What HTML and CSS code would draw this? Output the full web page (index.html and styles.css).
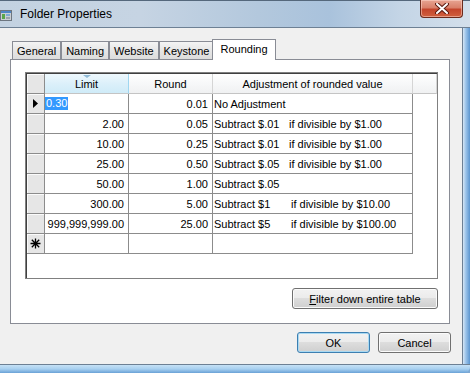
FILE: index.html
```html
<!DOCTYPE html>
<html lang="en">
<head>
  <meta charset="UTF-8">
  <title>Folder Properties</title>
  <link rel="stylesheet" href="styles.css">
</head>
<body>
  <div class="window">
    <!-- Title Bar -->
    <div class="titlebar">
      <svg class="app-icon" width="12" height="11" viewBox="0 0 12 11">
        <rect x="0.5" y="0.5" width="11" height="10" fill="#c9ced4" stroke="#6d7680"/>
        <rect x="1" y="1" width="10" height="2" fill="#4f86c6"/>
        <rect x="2" y="4" width="3" height="5" fill="#5aa54a"/>
        <rect x="6" y="4" width="4" height="2" fill="#7fa9d6"/>
        <rect x="6" y="7" width="4" height="2" fill="#9aa3ad"/>
      </svg>
      <span class="title">Folder Properties</span>
      <div class="close-btn">
        <svg width="14" height="11" viewBox="0 0 14 11">
          <path d="M2 1 L12 10 M12 1 L2 10" stroke="#5a1a10" stroke-width="4" stroke-linecap="round"/>
          <path d="M2 1 L12 10 M12 1 L2 10" stroke="#ffffff" stroke-width="2" stroke-linecap="round"/>
        </svg>
      </div>
    </div>

    <div class="frame">
      <div class="client">
        <!-- Tabs -->
        <div class="tabs">
          <div class="tab">General</div>
          <div class="tab">Naming</div>
          <div class="tab">Website</div>
          <div class="tab">Keystone</div>
          <div class="tab active">Rounding</div>
        </div>

        <div class="tab-page">
          <!-- Rounding Grid -->
          <div class="grid">
            <div class="grid-head">
              <div class="rh"></div>
              <div class="hcell col-limit sorted">Limit<span class="sort-glyph"></span></div>
              <div class="hcell col-round">Round</div>
              <div class="hcell col-adj">Adjustment of rounded value</div>
              <div class="hcell col-fill"></div>
            </div>

            <div class="grid-row">
              <div class="rh">
                <svg width="6" height="9" viewBox="0 0 6 9"><path d="M0 0 L5 4.5 L0 9 Z" fill="#000"/></svg>
              </div>
              <div class="cell col-limit edit"><span class="selected">0.30</span></div>
              <div class="cell col-round num">0.01</div>
              <div class="cell col-adj">No Adjustment</div>
            </div>
            <div class="grid-row">
              <div class="rh"></div>
              <div class="cell col-limit num">2.00</div>
              <div class="cell col-round num">0.05</div>
              <div class="cell col-adj"><span class="act">Subtract $.01</span>if divisible by $1.00</div>
            </div>
            <div class="grid-row">
              <div class="rh"></div>
              <div class="cell col-limit num">10.00</div>
              <div class="cell col-round num">0.25</div>
              <div class="cell col-adj"><span class="act">Subtract $.01</span>if divisible by $1.00</div>
            </div>
            <div class="grid-row">
              <div class="rh"></div>
              <div class="cell col-limit num">25.00</div>
              <div class="cell col-round num">0.50</div>
              <div class="cell col-adj"><span class="act">Subtract $.05</span>if divisible by $1.00</div>
            </div>
            <div class="grid-row">
              <div class="rh"></div>
              <div class="cell col-limit num">50.00</div>
              <div class="cell col-round num">1.00</div>
              <div class="cell col-adj">Subtract $.05</div>
            </div>
            <div class="grid-row">
              <div class="rh"></div>
              <div class="cell col-limit num">300.00</div>
              <div class="cell col-round num">5.00</div>
              <div class="cell col-adj"><span class="act wide">Subtract $1</span>if divisible by $10.00</div>
            </div>
            <div class="grid-row">
              <div class="rh"></div>
              <div class="cell col-limit num">999,999,999.00</div>
              <div class="cell col-round num">25.00</div>
              <div class="cell col-adj"><span class="act wide">Subtract $5</span>if divisible by $100.00</div>
            </div>
            <div class="grid-row">
              <div class="rh">
                <svg width="11" height="11" viewBox="0 0 11 11">
                  <path d="M5.5 0.5 V10.5 M0.5 5.5 H10.5 M1.8 1.8 L9.2 9.2 M9.2 1.8 L1.8 9.2" stroke="#000" stroke-width="1.3"/>
                </svg>
              </div>
              <div class="cell col-limit"></div>
              <div class="cell col-round"></div>
              <div class="cell col-adj"></div>
            </div>
          </div>

          <div class="page-actions">
            <button class="btn btn-filter"><u>F</u>ilter down entire table</button>
          </div>
        </div>

        <!-- Dialog Buttons -->
        <div class="dialog-actions">
          <button class="btn btn-default">OK</button>
          <button class="btn">Cancel</button>
        </div>
      </div>
      <div class="frame-right"></div>
    </div>
    <div class="frame-bottom"></div>
  </div>
</body>
</html>
```

FILE: styles.css
```css
/* General Styles */
* {
  box-sizing: border-box;
}

body {
  margin: 0;
  width: 470px;
  height: 373px;
  overflow: hidden;
  font-family: "Liberation Sans", Arial, sans-serif;
  font-size: 11px;
  color: #000;
  background-color: #7ea9d4;
}

.window {
  display: flex;
  flex-direction: column;
  width: 470px;
  height: 373px;
}

/* Title Bar */
.titlebar {
  height: 28px;
  display: flex;
  align-items: center;
  border-top: 1px solid #55687c;
  border-bottom: 1px solid #6d8094;
  background: linear-gradient(to right, #c3d2e1 0%, #c6d4e3 30%, #b3c8dd 55%, #a9c2dc 70%, #c4d5e6 85%, #d3dfeb 100%);
}

.app-icon {
  margin-left: 0;
  margin-top: 2px;
}

.title {
  margin-left: 8px;
  font-size: 12px;
  color: #000;
}

.close-btn {
  margin-left: auto;
  margin-right: 7px;
  align-self: flex-start;
  margin-top: -1px;
  width: 43px;
  height: 18px;
  display: flex;
  align-items: center;
  justify-content: center;
  border: 1px solid #6b2a1c;
  border-top: none;
  border-radius: 0 0 4px 4px;
  background: linear-gradient(#e7a492 0%, #d9806a 45%, #c4452c 55%, #d0603f 100%);
  box-shadow: inset 0 0 0 1px rgba(255, 220, 210, 0.5);
}

/* Frame */
.frame {
  display: flex;
  height: 336px;
}

.client {
  width: 462px;
  background-color: #f0f0f0;
  padding-left: 10px;
}

.frame-right {
  width: 8px;
  border-left: 1px solid #6d8094;
  background: linear-gradient(to right, #d6e6f4, #9cc4ea 40%, #5b95cf);
}

.frame-bottom {
  height: 9px;
  border-top: 1px solid #6d8094;
  border-radius: 0 0 6px 0;
  background: linear-gradient(#c6e1f6 0%, #a8d0f0 50%, #6aa2d6 100%);
}

/* Tabs */
.tabs {
  display: flex;
  align-items: flex-end;
  padding-top: 11px;
  padding-left: 2px;
}

.tab {
  height: 18px;
  padding: 0 4px;
  display: flex;
  align-items: center;
  border: 1px solid #898c95;
  border-bottom: none;
  background: linear-gradient(#f4f4f4, #e6e6e6 50%, #dcdcdc);
}

.tab.active {
  height: 21px;
  padding: 0 7px 2px;
  margin: 0 -2px -1px -2px;
  background: #fff;
  position: relative;
  z-index: 1;
}

.tab-page {
  width: 440px;
  height: 265px;
  border: 1px solid #898c95;
  background-color: #fff;
  padding: 12px 0 0 14px;
}

/* Grid */
.grid {
  width: 413px;
  height: 207px;
  border: 1px solid #808080;
  padding: 1px 0 0 1px;
  box-shadow: inset 1px 1px 0 #404040;
  background-color: #fff;
}

.grid-head,
.grid-row {
  display: flex;
  height: 20px;
}

.rh {
  width: 18px;
  height: 20px;
  display: flex;
  align-items: center;
  justify-content: center;
  background-color: #e6e6e6;
  border-right: 1px solid #8c8c8c;
  border-bottom: 1px solid #8c8c8c;
  box-shadow: inset 1px 1px 0 #fbfbfb;
}

.hcell {
  height: 20px;
  display: flex;
  align-items: center;
  justify-content: center;
  border-right: 1px solid #d5d5d5;
  border-bottom: 1px solid #c4c4c4;
  background: linear-gradient(#ffffff, #f7f8f9 50%, #f0f1f2);
}

.hcell.sorted {
  position: relative;
  background: linear-gradient(#eef8fd, #dcf0fa 50%, #cfebf8);
  border-right-color: #9fd6f0;
}

.sort-glyph {
  position: absolute;
  top: 1px;
  left: 38px;
  border-left: 4px solid transparent;
  border-right: 4px solid transparent;
  border-top: 3px solid #8fbad6;
}

.col-limit {
  width: 84px;
}

.col-round {
  width: 84px;
}

.col-adj {
  width: 200px;
}

.col-fill {
  flex: 1;
}

.cell {
  height: 20px;
  display: flex;
  align-items: center;
  white-space: nowrap;
  border-right: 1px solid #8c8c8c;
  border-bottom: 1px solid #8c8c8c;
  padding-left: 1px;
}

.cell.num {
  justify-content: flex-end;
  padding-right: 4px;
}

.cell.edit {
  padding-left: 0;
}

.selected {
  background-color: #3399ff;
  color: #fff;
  padding: 0 1px;
  line-height: 13px;
}

.act {
  display: inline-block;
  width: 75px;
}

.act.wide {
  width: 77px;
}

/* Buttons */
.page-actions {
  display: flex;
  justify-content: flex-end;
  padding-right: 11px;
  margin-top: 9px;
}

.btn {
  height: 21px;
  width: 73px;
  padding: 0;
  font-family: "Liberation Sans", Arial, sans-serif;
  font-size: 11px;
  color: #000;
  border: 1px solid #707070;
  border-radius: 3px;
  background: linear-gradient(#f2f2f2 0%, #ebebeb 49%, #dddddd 50%, #cfcfcf 100%);
  box-shadow: inset 0 0 0 1px #fbfbfb;
}

.btn-filter {
  width: 146px;
}

.btn-default {
  border-color: #3c7fb1;
  box-shadow: inset 0 0 0 1px #a9d9f2;
}

.dialog-actions {
  display: flex;
  justify-content: flex-end;
  gap: 8px;
  padding-right: 11px;
  margin-top: 8px;
}
```
